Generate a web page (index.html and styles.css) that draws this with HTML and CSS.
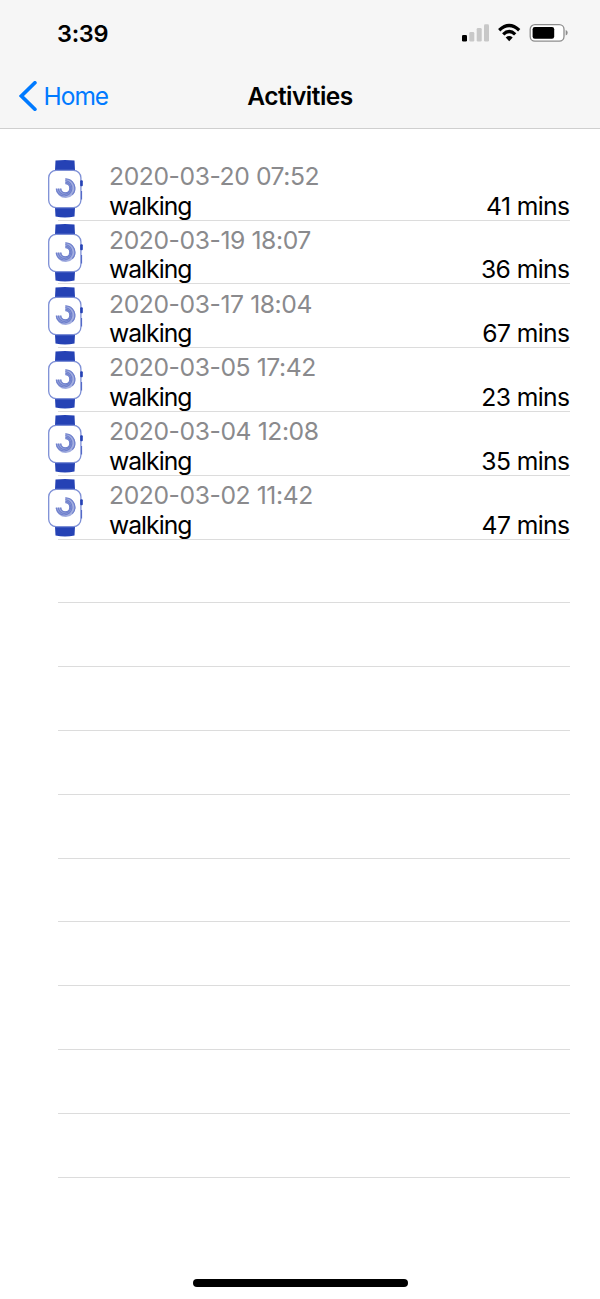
FILE: index.html
```
<!DOCTYPE html>
<html lang="en">
<head>
<meta charset="utf-8">
<title>Activities</title>
<link rel="stylesheet" href="styles.css">
</head>
<body>
<svg width="0" height="0" class="defs">
  <symbol id="watch" viewBox="0 0 36 60">
    <path fill="#2542b5" d="M7.500 1.500Q17 .3 26.500 1.500L27 11.500H7zM7 48.500H27L26.500 57.600Q17 59.400 7.500 57.600z"/>
    <rect x=".7" y="11.300" width="32.200" height="37.400" rx="7.500" fill="#fff" stroke="#7d8fd6" stroke-width="1.300"/>
    <rect x="32.200" y="21.200" width="2.600" height="6" rx="1" fill="#2542b5"/>
    <path stroke="#4a62c4" stroke-width="1" d="M33.600 32v8.500"/>
    <path fill="none" stroke="#a3aee0" stroke-width="5.600" d="M17.400 22.300A7 7 0 1 1 10.600 29.600"/>
    <g fill="none" stroke="#6f80cc" stroke-width="1.200">
      <path d="M17.400 19.900A9.400 9.400 0 0 1 24.300 35.700"/>
      <path d="M17.400 21.500A7.800 7.800 0 1 1 8.300 29.600"/>
      <path d="M17.400 23.100A6.200 6.200 0 1 1 10.300 29.600"/>
      <path d="M17.400 24.700A4.600 4.600 0 1 1 12.600 29.600"/>
    </g>
  </symbol>
</svg>
<div class="screen">
  <header class="header">
    <div class="status">
      <span class="time">3:39</span>
      <svg class="indicators" width="108" height="20" viewBox="0 0 108 20">
        <rect x="0" y="12" width="5" height="6.500" rx="1.300" fill="#000"/>
        <g fill="#c8c8c8"><rect x="7.300" y="9" width="5" height="9.500" rx="1.300"/><rect x="14.700" y="5" width="5" height="13.500" rx="1.300"/><rect x="22" y="1.300" width="5" height="17.200" rx="1.300"/></g>
        <g fill="none" stroke="#000" stroke-width="3.300"><path d="M37.200 7.200Q47.200 -2 57.200 7.200"/><path d="M41.200 11.400Q47.200 5.800 53.200 11.400"/></g>
        <path d="M43.700 14.400Q47.200 11.500 50.700 14.400L47.200 18.300z"/>
        <rect x="68.200" y="1.600" width="33.800" height="16.600" rx="4.700" fill="#fff" stroke="#8d8d8d" stroke-width="1.300"/>
        <rect x="70.600" y="4" width="21.600" height="11.800" rx="2.200"/>
        <path d="M103.700 7v5.600q2-.8 2-2.800t-2-2.800z" fill="#8d8d8d"/>
      </svg>
    </div>
    <nav class="nav">
      <a class="back"><svg width="18" height="30" viewBox="0 0 18 30"><path d="M15.900 1.800 2.400 15 15.900 28.200" fill="none" stroke="#007aff" stroke-width="3.700" stroke-linecap="round" stroke-linejoin="miter"/></svg><span>Home</span></a>
      <h1 class="title">Activities</h1>
    </nav>
  </header>
  <main class="list">
    <div class="row"><svg class="watch"><use href="#watch"/></svg><div class="text"><p class="date">2020-03-20 07:52</p><p class="detail"><span class="kind">walking</span><span class="length">41 mins</span></p></div></div>
    <div class="row"><svg class="watch"><use href="#watch"/></svg><div class="text"><p class="date">2020-03-19 18:07</p><p class="detail"><span class="kind">walking</span><span class="length">36 mins</span></p></div></div>
    <div class="row"><svg class="watch"><use href="#watch"/></svg><div class="text"><p class="date">2020-03-17 18:04</p><p class="detail"><span class="kind">walking</span><span class="length">67 mins</span></p></div></div>
    <div class="row"><svg class="watch"><use href="#watch"/></svg><div class="text"><p class="date">2020-03-05 17:42</p><p class="detail"><span class="kind">walking</span><span class="length">23 mins</span></p></div></div>
    <div class="row"><svg class="watch"><use href="#watch"/></svg><div class="text"><p class="date">2020-03-04 12:08</p><p class="detail"><span class="kind">walking</span><span class="length">35 mins</span></p></div></div>
    <div class="row"><svg class="watch"><use href="#watch"/></svg><div class="text"><p class="date">2020-03-02 11:42</p><p class="detail"><span class="kind">walking</span><span class="length">47 mins</span></p></div></div>
    <div class="row"></div><div class="row"></div><div class="row"></div><div class="row"></div><div class="row"></div>
    <div class="row"></div><div class="row"></div><div class="row"></div><div class="row"></div><div class="row"></div>
  </main>
  <div class="home-bar"></div>
</div>
</body>
</html>
```
FILE: styles.css
```
* { box-sizing: border-box; margin: 0; padding: 0; }
body { background: #fff; color: #000; font-family: Inter, "Liberation Sans", sans-serif; }
.defs { display: block; }
svg { display: block; flex: none; }
.screen { height: 1299px; display: flex; flex-direction: column; overflow: hidden; }
.header { height: 129px; background: #f6f6f6; border-bottom: 1px solid #cfcfcf; }
.status { height: 66px; display: flex; justify-content: space-between; align-items: center; padding: 0 30px 0 57px; }
.time { font-size: 23.5px; font-weight: 600; letter-spacing: -0.3px; }
.nav { height: 60px; display: grid; grid-template-columns: 1fr auto 1fr; align-items: center; padding: 0 18.5px; }
.back { display: flex; align-items: center; gap: 7px; color: #007aff; font-size: 24.5px; letter-spacing: -1px; }
.title { font-size: 24.5px; font-weight: 600; letter-spacing: -0.5px; }
.list { flex: 1; padding: 27.9px 30px 0 58px; }
.row { height: 63.8px; border-bottom: 1px solid #dcdcdc; display: flex; }
.watch { width: 36px; height: 60px; margin: 2px 25px 0 -10px; }
.text { flex: 1; padding-top: 5.2px; }
.date, .detail { font-size: 24.7px; line-height: 29.6px; letter-spacing: -0.42px; white-space: nowrap; }
.date { color: #8a8a8d; }
.detail { display: flex; justify-content: space-between; }
.kind { letter-spacing: -0.98px; }
.length { letter-spacing: -0.6px; padding-right: 0.5px; }
.home-bar { width: 215px; height: 8px; margin: 0 auto 12px; border-radius: 4px; background: #000; }
```
